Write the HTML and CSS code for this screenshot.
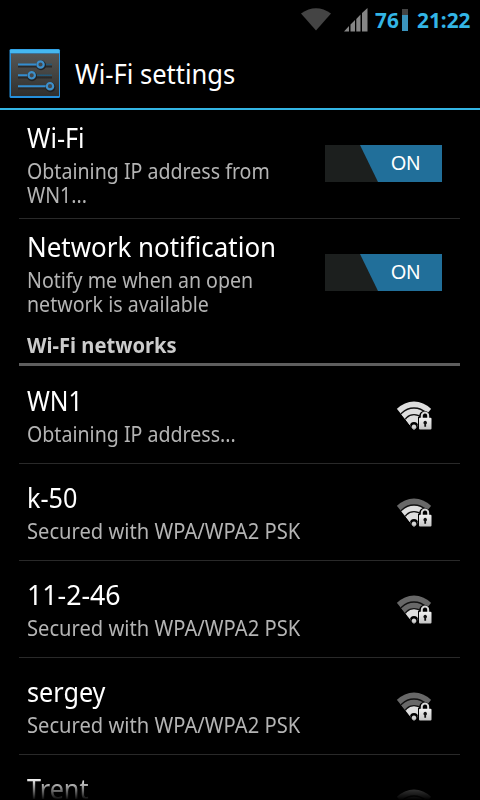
FILE: index.html
```html
<!DOCTYPE html>
<html lang="en">
<head>
<meta charset="utf-8">
<title>Wi-Fi settings</title>
<link rel="stylesheet" href="styles.css">
</head>
<body>
<svg class="defs" width="0" height="0" aria-hidden="true">
  <defs>
    <linearGradient id="silver" x1="0" y1="0" x2="0" y2="1"><stop offset="0" stop-color="#f2f2f2"/><stop offset="1" stop-color="#c4c4c4"/></linearGradient>
    <clipPath id="fan"><path d="M18 30 15.500 27 1 9 -3 4V-4H39V4L35 9 20.500 27z"/></clipPath>
    <g id="signal">
      <g clip-path="url(#fan)" stroke="#111" stroke-width="1.300">
        <circle class="b3" cx="18" cy="25.200" r="23.600" stroke="none"/>
        <circle class="b2" cx="18" cy="25.200" r="17.200"/>
        <circle class="b1" cx="18" cy="25.200" r="10.600"/>
        <circle cx="18" cy="26" r="4" fill="#000" stroke="none"/>
      </g>
      <circle cx="18" cy="26.700" r="2.200" fill="#d4d4d4"/>
    </g>
    <g id="lock">
      <path d="M22 30.500V17h1.200v-1a5.300 5.300 0 0 1 10.600 0V17H36.500v13.500z" fill="#000"/>
      <path d="M25.800 18.500v-2.700a3.200 3.200 0 0 1 6.400 0V18.500" fill="none" stroke="#d8d8d8" stroke-width="2"/>
      <rect x="23" y="17.700" width="12.500" height="11.800" rx="1" fill="url(#silver)"/>
      <path d="M29.200 20.800a1.900 1.900 0 0 1 .9 3.500v2.400h-1.800v-2.400a1.900 1.900 0 0 1 .9-3.500z" fill="#111"/>
    </g>
  </defs>
</svg>
<div class="screen">
  <header class="status">
    <svg class="status-wifi" width="30" height="23" viewBox="0 0 30 23"><path d="M0 5.500Q15-5 30 5.500L15 22.500z" fill="#444"/></svg>
    <svg class="status-signal" width="24" height="24" viewBox="0 0 24 24"><path d="M0 23.500 5 18v5.500zM6.500 23.500v-7L11 12v11.500zM12.300 23.500V11L16.500 6.500v17zM18 23.500V5L23.500 0v23.500z" fill="#858585"/></svg>
    <span class="percent"><span class="t w99">76</span></span>
    <span class="battery"></span>
    <span class="clock"><span class="t w99">21:22</span></span>
  </header>
  <div class="titlebar">
    <svg width="52" height="50" viewBox="0 0 52 50">
      <defs><linearGradient id="panel" x1="0" y1="0" x2="0" y2="1"><stop offset="0" stop-color="#565654"/><stop offset="1" stop-color="#30302e"/></linearGradient></defs>
      <rect x=".5" y="0" width="50.500" height="49" rx="1.500" fill="#2590dc"/>
      <path d="M1 1.500Q1 .5 2 .5H49.500Q50.500.5 50.500 1.500V4H1z" fill="#45b8f0"/>
      <rect x="2" y="4.500" width="48" height="42.500" fill="url(#panel)"/>
      <path d="M9 17.500h34M9 28.500h34M9 39.500h34" stroke="#292929" stroke-width="2"/>
      <path d="M30 15.500h13M22 26.200h21" stroke="#235878" stroke-width="1.500"/>
      <path d="M9 15.500h20M9 26.200h11M9 37.200h30" stroke="#338dd0" stroke-width="2"/>
      <g fill="#444" stroke="#222" stroke-width="3"><circle cx="32" cy="16.300" r="3.500"/><circle cx="23" cy="27.200" r="3.500"/><circle cx="41.500" cy="38.200" r="3.500"/></g>
      <g fill="#454749" stroke="#3d8fca" stroke-width="2.200"><circle cx="31.500" cy="15.500" r="3.200"/><circle cx="22.700" cy="26.300" r="3.200"/><circle cx="41" cy="37.200" r="3.200"/></g>
    </svg>
    <h1><span class="t w94">Wi-Fi settings</span></h1>
  </div>
  <main class="list">
    <section class="row tall">
      <div class="copy"><h2><span class="t">Wi-Fi</span></h2><p><span class="t">Obtaining IP address from<br>WN1...</span></p></div>
      <div class="switch"><span class="thumb">ON</span></div>
    </section>
    <section class="row tall plain">
      <div class="copy"><h2><span class="t w96">Network notification</span></h2><p><span class="t">Notify me when an open<br>network is available</span></p></div>
      <div class="switch"><span class="thumb">ON</span></div>
    </section>
    <h3><span class="t w96">Wi-Fi networks</span></h3>
    <section class="row">
      <div class="copy"><h2><span class="t w91">WN1</span></h2><p><span class="t">Obtaining IP address...</span></p></div>
      <svg class="wifi full" width="37" height="31" viewBox="0 0 37 31"><use href="#signal"/><use href="#lock"/></svg>
    </section>
    <section class="row">
      <div class="copy"><h2><span class="t">k-50</span></h2><p><span class="t w96">Secured with WPA/WPA2 PSK</span></p></div>
      <svg class="wifi good" width="37" height="31" viewBox="0 0 37 31"><use href="#signal"/><use href="#lock"/></svg>
    </section>
    <section class="row">
      <div class="copy"><h2><span class="t w99">11-2-46</span></h2><p><span class="t w96">Secured with WPA/WPA2 PSK</span></p></div>
      <svg class="wifi" width="37" height="31" viewBox="0 0 37 31"><use href="#signal"/><use href="#lock"/></svg>
    </section>
    <section class="row">
      <div class="copy"><h2><span class="t">sergey</span></h2><p><span class="t w96">Secured with WPA/WPA2 PSK</span></p></div>
      <svg class="wifi" width="37" height="31" viewBox="0 0 37 31"><use href="#signal"/><use href="#lock"/></svg>
    </section>
    <section class="row">
      <div class="copy"><h2><span class="t">Trent</span></h2></div>
      <svg class="wifi" width="37" height="31" viewBox="0 0 37 31"><use href="#signal"/><use href="#lock"/></svg>
    </section>
  </main>
</div>
</body>
</html>
```
FILE: styles.css
```css
* { box-sizing: border-box; margin: 0; padding: 0; }
body { background: #000; color: #fff; font-family: "Noto Sans", sans-serif; overflow: hidden; }
.defs { position: absolute; }
.screen { width: 480px; height: 800px; overflow: hidden; display: flex; flex-direction: column; }
.t { display: inline-block; transform-origin: 0 50%; transform: scaleX(.933); white-space: nowrap; }
.t.w91 { transform: scaleX(.91); }
.t.w94 { transform: scaleX(.945); }
.t.w96 { transform: scaleX(.96); }
.t.w99 { transform: scaleX(.99); }
.status { height: 38px; flex: none; display: flex; align-items: flex-start; padding: 8px 0 0 301px; color: #33b5e5; font-size: 21px; font-weight: 700; line-height: 24px; }
.status-signal { margin-left: 13px; }
.percent { width: 27px; margin-left: 7px; }
.battery { width: 6px; height: 22px; margin: 1px 9px 0 0; background: linear-gradient(#444 6px, #3b94bd 6px); }
.titlebar { height: 72px; flex: none; display: flex; align-items: center; padding: 1px 0 0 9px; border-bottom: 2px solid #33b5e5; }
h1 { margin-left: 14px; font-size: 27px; font-weight: 400; line-height: 36px; }
.list { flex: 1; min-height: 0; overflow: hidden; padding: 0 20px 0 19px; mask-image: linear-gradient(#000 calc(100% - 22px), transparent 100%); }
.row { height: 97px; display: flex; padding: 16px 18px 0 8px; border-bottom: 1px solid #292929; }
.row.tall { height: 109px; padding-top: 10px; }
.row.plain { border: 0; }
.copy { flex: 1; }
h2 { font-size: 27px; font-weight: 400; line-height: 36px; }
p { color: #b4b4b4; font-size: 21px; line-height: 24px; margin-top: 3px; }
.switch { width: 117px; height: 37px; margin-top: 25px; background: #1c1f1e; flex: none; }
.thumb { display: block; height: 37px; margin-left: 35px; padding-left: 31px; background: #216f9a; clip-path: polygon(0 0, 100% 0, 100% 100%, 18px 100%); font: 19.5px/37px "Liberation Sans", sans-serif; }
h3 { height: 38px; margin-bottom: 1px; padding-left: 8px; border-bottom: 3px solid #5e5e5e; color: #ccc; font-size: 21px; line-height: 35px; font-weight: 700; }
.wifi { --b3: #686868; --b2: #686868; flex: none; margin: 17px 9px 0 0; overflow: visible; }
.wifi.good { --b2: #dedede; }
.wifi.full { --b3: #dedede; --b2: #dedede; }
.b3 { fill: var(--b3); }
.b2 { fill: var(--b2); }
.b1 { fill: #dedede; }
```
